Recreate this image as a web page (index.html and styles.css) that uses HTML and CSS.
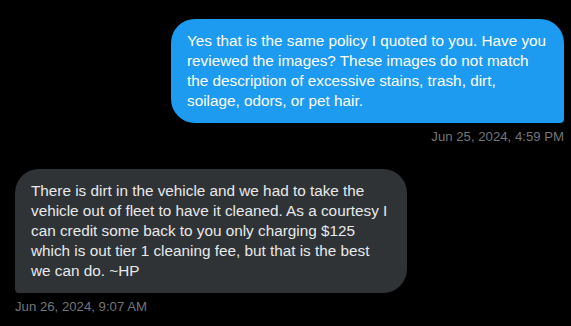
FILE: index.html
```html
<!DOCTYPE html>
<html>
<head>
<meta charset="utf-8">
<link rel="stylesheet" href="styles.css">
</head>
<body>
<div class="thread">
  <div class="msg sent">
    <div class="bubble">Yes that is the same policy I quoted to you. Have you<br>reviewed the images? These images do not match<br>the description of excessive stains, trash, dirt,<br>soilage, odors, or pet hair.</div>
    <div class="time">Jun 25, 2024, 4:59 PM</div>
  </div>
  <div class="msg received">
    <div class="bubble">There is dirt in the vehicle and we had to take the<br>vehicle out of fleet to have it cleaned. As a courtesy I<br>can credit some back to you only charging $125<br>which is out tier 1 cleaning fee, but that is the best<br>we can do. ~HP</div>
    <div class="time">Jun 26, 2024, 9:07 AM</div>
  </div>
</div>
</body>
</html>
```
FILE: styles.css
```css
html, body {
  margin: 0;
  padding: 0;
  background: #000;
}
body {
  font-family: "Liberation Sans", Arial, sans-serif;
  color: #e7e9ea;
}
.thread {
  display: flex;
  flex-direction: column;
  padding: 19px 7px 0 15px;
  gap: 24px;
}
.msg {
  display: flex;
  flex-direction: column;
}
.sent { align-items: flex-end; }
.received { align-items: flex-start; }
.bubble {
  font-size: 15.3px;
  line-height: 20px;
  padding: 12px 16px;
  white-space: nowrap;
  border-radius: 24px;
}
.sent .bubble {
  background: #1d9bf0;
  color: #fff;
  border-bottom-right-radius: 4px;
  width: 361px;
}
.received .bubble {
  background: #2f3336;
  color: #e7e9ea;
  border-bottom-left-radius: 4px;
  width: 360px;
}
.time {
  font-size: 13.2px;
  line-height: 16px;
  color: #71767b;
  margin-top: 6px;
}
```
